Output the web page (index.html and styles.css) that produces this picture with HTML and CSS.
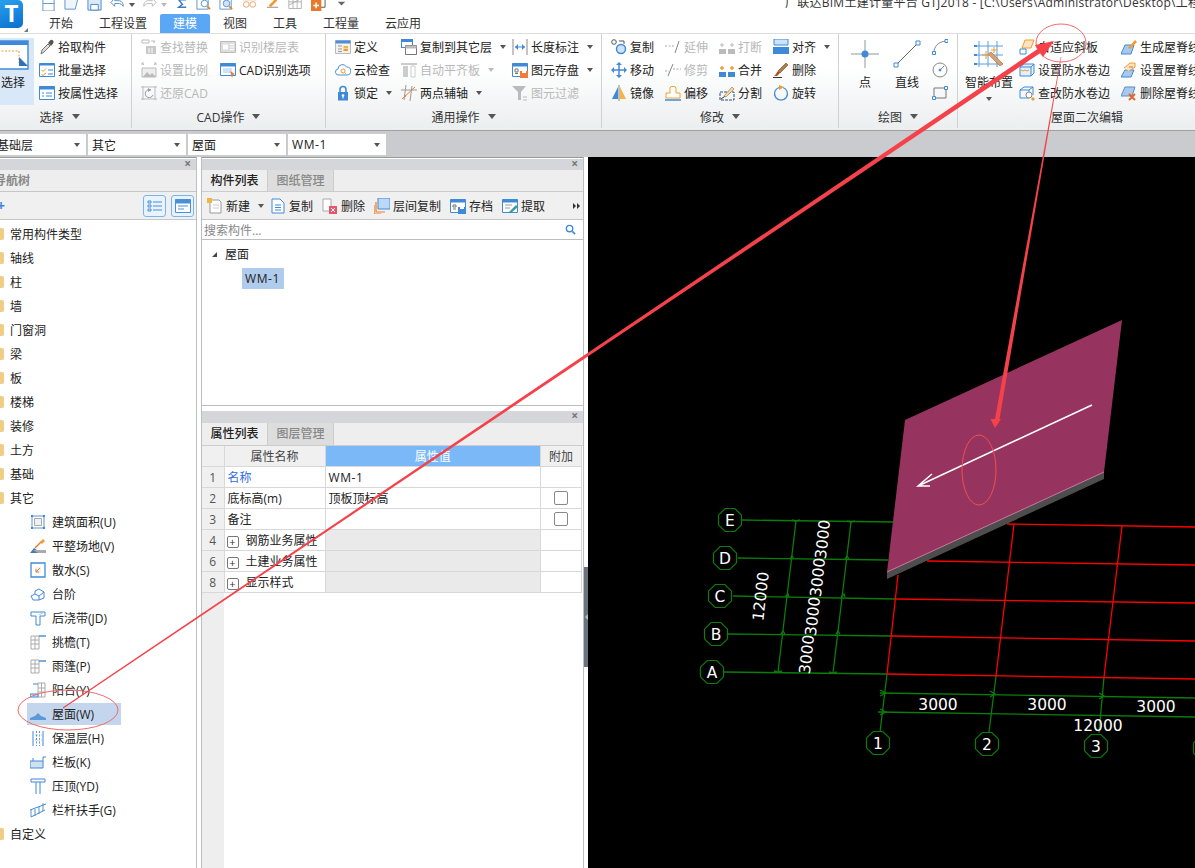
FILE: index.html
```html
<!DOCTYPE html>
<html lang="zh-CN">
<head>
  <meta charset="UTF-8">
  <title>广联达BIM土建计量平台 GTJ2018</title>
  <link rel="stylesheet" href="styles.css">
</head>
<body>
  <!-- Title bar and tabs -->
  <div class="top">
    <div class="app-btn">
      <div class="app-logo">T</div>
      <div class="app-corner"></div>
    </div>
    <div class="top-right">
      <div class="quick">
        <span class="q"><svg viewBox="0 0 16 16"><path d="M2 0h12v16H2z" fill="#fff" stroke="#5b93cc"/><path d="M2 8h12" stroke="#5b93cc"/></svg></span>
        <span class="q"><svg viewBox="0 0 16 16"><path d="M1 14V2h14l-3 12z" fill="#eef5fc" stroke="#5b93cc"/></svg></span>
        <span class="q"><svg viewBox="0 0 16 16"><path d="M1 0h14v15H1z" fill="#dceafa" stroke="#4a86c8"/><path d="M4 9h8v6H4z" fill="#fff" stroke="#4a86c8"/></svg></span>
        <span class="q q-s"><svg viewBox="0 0 16 16"><path d="M1 7l4-5v3h5a5 5 0 0 1 4 6 5 5 0 0 0-4-3H5v3z" fill="#fff" stroke="#5b8fc4"/></svg></span>
        <span class="q q-c"><i class="caret"></i></span>
        <span class="q q-s"><svg viewBox="0 0 16 16"><path d="M15 7l-4-5v3H6a5 5 0 0 0-4 6 5 5 0 0 1 4-3h5v3z" fill="#fff" stroke="#bbb"/></svg></span>
        <span class="q q-c"><i class="caret off"></i></span>
        <span class="q q-n"><svg viewBox="0 0 16 16"><path d="M5 4h8M5 4l4 5-4 3h8" fill="none" stroke="#3b7cc4" stroke-width="1.5"/></svg></span>
        <span class="q"><svg viewBox="0 0 16 16"><path d="M1 0h12v14H1z" fill="#fff" stroke="#5b93cc"/><circle cx="9" cy="8" r="3.5" fill="#fff" stroke="#5b93cc"/><path d="M12 11l3 3" stroke="#e8812a" stroke-width="2"/></svg></span>
        <span class="q"><svg viewBox="0 0 16 16"><path d="M1 0h12v14H1z" fill="#fff" stroke="#5b93cc"/><circle cx="8" cy="8" r="3.5" fill="#cfe3f7" stroke="#5b93cc"/><path d="M11 11l3 3" stroke="#e8812a" stroke-width="2"/></svg></span>
        <span class="q"><svg viewBox="0 0 16 16"><path d="M1 0h14v4H1z" fill="#f7d7b5" stroke="#e8a068"/><circle cx="4.5" cy="9" r="3" fill="#fff" stroke="#e8a068"/><circle cx="11.5" cy="9" r="3" fill="#fff" stroke="#e8a068"/></svg></span>
        <span class="q"><svg viewBox="0 0 16 16"><path d="M2 12h12" stroke="#888"/><path d="M4 10l7-7 2 2-7 7z" fill="#f09a30"/></svg></span>
        <span class="q"><svg viewBox="0 0 18 16"><path d="M1 0h15v14H1zM6 0v14M11 0v14M1 6h15" fill="none" stroke="#aaa"/><path d="M1 10l15-8" stroke="#aaa"/></svg></span>
        <span class="q"><svg viewBox="0 0 16 16"><path d="M5 0h10v12H5z" fill="#fff" stroke="#555"/><path d="M0 4h11v12H0z" fill="#e8792a"/><path d="M5.5 7v6M2.500 10h6" stroke="#fff" stroke-width="1.6"/></svg></span>
        <span class="q"><svg viewBox="0 0 16 16"><path d="M4 3h8" stroke="#666"/><path d="M4 6l4 4 4-4z" fill="#666"/></svg></span>
        <div class="win-title">广联达BIM土建计量平台 GTJ2018 - [C:\Users\Administrator\Desktop\工程</div>
      </div>
      <div class="tabs">
        <div class="tab">开始</div>
        <div class="tab">工程设置</div>
        <div class="tab active">建模</div>
        <div class="tab">视图</div>
        <div class="tab">工具</div>
        <div class="tab">工程量</div>
        <div class="tab">云应用</div>
      </div>
    </div>
  </div>

  <!-- Ribbon -->
  <div class="ribbon">
    <div class="group g-select">
      <div class="group-body">
        <div class="large select-btn">
          <svg class="ic-lg" viewBox="0 0 30 30"><path d="M-4 1h32v28H-4z" fill="#fff" stroke="#3f8ad8" stroke-width="1.4"/><path d="M-4 1h32v4H-4z" fill="#3f8ad8"/><path d="M-2 11h21v12" fill="none" stroke="#f09a30" stroke-dasharray="2 1.5"/><path d="M19 17l9 9H19z" fill="#3572b4"/></svg>
          <span>选择</span>
        </div>
        <div class="col">
          <div class="item"><svg class="ic" viewBox="0 0 16 16"><path d="M2 15l1-4 6-6 2 2-6 6z" fill="#ddd" stroke="#777"/><path d="M9 4l2-2.500a1.800 1.800 0 0 1 3 3L12 7z" fill="#555"/></svg>拾取构件</div>
          <div class="item"><svg class="ic" viewBox="0 0 16 16"><path d="M.5 1.500h15v13H.5z" fill="#fff" stroke="#3f8ad8"/><path d="M.5 1.500h15v2H.5z" fill="#3f8ad8"/><path d="M2.500 8l1.500 1.500L7 6.500M2.500 12.500l1.500 1 3-2.500" fill="none" stroke="#f09a30"/><path d="M9 8h5M9 12h5" stroke="#3f8ad8"/></svg>批量选择</div>
          <div class="item"><svg class="ic" viewBox="0 0 16 16"><path d="M.5 1.500h15v13H.5z" fill="#fff" stroke="#3f8ad8"/><path d="M.5 1.500h15v3H.5z" fill="#3f8ad8"/><path d="M3 8h2M3 11h2M7 8h6M7 11h6" stroke="#3f8ad8"/></svg>按属性选择</div>
        </div>
      </div>
      <div class="group-label label-select">选择<i class="caret big"></i></div>
    </div>

    <div class="group g-cad">
      <div class="group-body">
        <div class="col col-cad1">
          <div class="item off"><svg class="ic" viewBox="0 0 16 16"><path d="M1 1h7v3H1zM10 2h4l-1.500 2" fill="none" stroke="#bbb"/><path d="M5 7h10v8H5z" fill="#c8c8c8"/><path d="M8 9v5M11 9v5" stroke="#fff"/></svg>查找替换</div>
          <div class="item off"><svg class="ic" viewBox="0 0 16 16"><path d="M1 6h14v9H1z" fill="#eee" stroke="#bbb"/><path d="M2 15l4-5 3 3 2-2 4 4z" fill="#bbb"/><path d="M1 1l2 2M3 1H1v2M15 1l-2 2M13 1h2v2" fill="none" stroke="#bbb"/></svg>设置比例</div>
          <div class="item off"><svg class="ic" viewBox="0 0 16 16"><path d="M2 1v14M14 1v14M0 2h16M0 14h16" stroke="#bbb"/><path d="M10 5a4 4 0 1 0 2 5" fill="none" stroke="#999"/><path d="M7 3l3 2-3 2z" fill="#999"/></svg>还原CAD</div>
        </div>
        <div class="col">
          <div class="item off"><svg class="ic" viewBox="0 0 16 16"><path d="M.5 2.500h15v11H.5z" fill="#ddd" stroke="#bbb"/><path d="M3 5.500h5v5H3z" fill="#fff"/><path d="M10 5.500h4M10 8h4M10 10.500h4" stroke="#fff"/></svg>识别楼层表</div>
          <div class="item"><svg class="ic" viewBox="0 0 16 16"><path d="M.5 1.500h15v12H.5z" fill="#fff" stroke="#3f8ad8"/><path d="M.5 1.500h15v3H.5z" fill="#3f8ad8"/><path d="M3 6h9v5H3z" fill="#cfe3f7"/><path d="M10 9l5 3-2 1-1 3z" fill="#ee7b3c"/></svg>CAD识别选项</div>
        </div>
      </div>
      <div class="group-label">CAD操作<i class="caret big"></i></div>
    </div>

    <div class="group g-common">
      <div class="group-body">
        <div class="col col-c1">
          <div class="item"><svg class="ic" viewBox="0 0 16 16"><path d="M.5 1.500h15v13H.5z" fill="#f2f2f2" stroke="#bbb"/><path d="M.5 1.500h15v3H.5z" fill="#4a90d9"/><path d="M3 7h4M3 10h4M3 12.500h4" stroke="#999"/><path d="M8.500 7H13v2.500H8.500z" fill="#f5b342"/><path d="M8.500 11H13" stroke="#f09a30" stroke-width="2"/></svg>定义</div>
          <div class="item"><svg class="ic" viewBox="0 0 16 16"><path d="M4 13a3 3 0 0 1-1-6 4.500 4.500 0 0 1 8.500-2A4 4 0 0 1 12 13z" fill="#fff" stroke="#4a90d9"/><circle cx="8" cy="9" r="2" fill="none" stroke="#f09a30"/><path d="M9.500 10.500l1.500 1.500" stroke="#f09a30"/></svg>云检查</div>
          <div class="item"><svg class="ic" viewBox="0 0 16 16"><path d="M5 7V4.500a3 3 0 0 1 6 0V7" fill="none" stroke="#3f8ad8" stroke-width="1.600"/><path d="M3 7h10v8.500H3z" fill="#3f8ad8"/><circle cx="8" cy="10.500" r="1.300" fill="#fff"/><path d="M8 11v2.500" stroke="#fff"/></svg>锁定<i class="caret"></i></div>
        </div>
        <div class="col col-c2">
          <div class="item"><svg class="ic" viewBox="0 0 16 16"><path d="M0 0h12v9H0z" fill="#3f8ad8"/><path d="M1 3h10v5H1z" fill="#fff"/><path d="M4.500 6.500h11v9h-11z" fill="#fff" stroke="#777"/><path d="M4.500 6.500h11v3h-11z" fill="#bbb"/></svg>复制到其它层<i class="caret"></i></div>
          <div class="item off"><svg class="ic" viewBox="0 0 16 16"><path d="M0 1h16v2H0z" fill="#ccc"/><path d="M2 4h5v11H2z" fill="#ccc"/><path d="M10 4h4v11h-4z" fill="#fff" stroke="#ccc"/></svg>自动平齐板<i class="caret off"></i></div>
          <div class="item"><svg class="ic" viewBox="0 0 16 16"><path d="M5 0L3 15M11 1L9 16M0 5h16" fill="none" stroke="#999"/><path d="M1 14L14 2" stroke="#ee7b3c"/><circle cx="4" cy="11" r="1" fill="#ee7b3c"/></svg>两点辅轴<i class="caret"></i></div>
        </div>
        <div class="col">
          <div class="item"><svg class="ic" viewBox="0 0 16 16"><path d="M1 0v16M15 0v16" stroke="#888"/><path d="M3 8h10" stroke="#3f8ad8"/><path d="M3 8l3-3v6zM13 8l-3-3v6z" fill="#3f8ad8"/></svg>长度标注<i class="caret"></i></div>
          <div class="item"><svg class="ic" viewBox="0 0 16 16"><path d="M.5 1.500h15v13H.5z" fill="#fff" stroke="#3f8ad8"/><path d="M.5 1.500h15v3H.5z" fill="#3f8ad8"/><path d="M3 7h3v3H3zM3 11.500h3" fill="none" stroke="#777"/><path d="M8 9h8v7H8z" fill="#ee7b3c"/><path d="M10 9h4v2h-4z" fill="#fff"/></svg>图元存盘<i class="caret"></i></div>
          <div class="item off"><svg class="ic" viewBox="0 0 16 16"><path d="M0 1h14L9 7v8H6V7z" fill="#bbb"/><path d="M11 12h4M11 15h4" stroke="#bbb"/></svg>图元过滤</div>
        </div>
      </div>
      <div class="group-label">通用操作<i class="caret big"></i></div>
    </div>

    <div class="group g-modify">
      <div class="group-body">
        <div class="col col-m">
          <div class="item"><svg class="ic" viewBox="0 0 16 16"><circle cx="3" cy="3" r="2.300" fill="#fff" stroke="#555"/><circle cx="10" cy="10" r="4.500" fill="#cfe3f7" stroke="#3f8ad8" stroke-width="1.500"/><path d="M8 2h5v3" fill="none" stroke="#555"/></svg>复制</div>
          <div class="item"><svg class="ic" viewBox="0 0 16 16"><path d="M8 3v10M3 8h10" stroke="#3f8ad8" stroke-width="1.500"/><path d="M8 0l3 3H5zM8 16l3-3H5zM0 8l3-3v6zM16 8l-3-3v6z" fill="#3f8ad8"/></svg>移动</div>
          <div class="item"><svg class="ic" viewBox="0 0 16 16"><path d="M7 2L1 14h6z" fill="#3f8ad8"/><path d="M9 2v12h6z" fill="#f5b342"/><path d="M8 0v16" stroke="#888"/></svg>镜像</div>
        </div>
        <div class="col col-m">
          <div class="item off"><svg class="ic" viewBox="0 0 16 16"><path d="M0 7h9" stroke="#aaa" stroke-dasharray="2 1.500"/><path d="M10 14l4-12" stroke="#888"/></svg>延伸</div>
          <div class="item off"><svg class="ic" viewBox="0 0 16 16"><path d="M0 9h4M8 7h8" stroke="#aaa" stroke-dasharray="2 1.500"/><path d="M3 14L8 2" stroke="#888"/></svg>修剪</div>
          <div class="item"><svg class="ic" viewBox="0 0 16 16"><path d="M1 13V8h4V3.500a2 2 0 0 1 2-2h2a2 2 0 0 1 2 2V8h4v5z" fill="#fff" stroke="#f0a030"/><path d="M0 15h16" stroke="#3f8ad8" stroke-width="1.500"/></svg>偏移</div>
        </div>
        <div class="col col-m">
          <div class="item off"><svg class="ic" viewBox="0 0 16 16"><path d="M0 10h7v5H0zM9 10h7v5H9z" fill="#bbb"/><path d="M1 6h4M3 4v4M11 6h4M13 4v4" stroke="#bbb"/></svg>打断</div>
          <div class="item"><svg class="ic" viewBox="0 0 16 16"><path d="M0 10h7v5H0zM9 10h7v5H9z" fill="#3f8ad8"/><path d="M1 6h4M3 4v4M11 6h4M13 4v4" stroke="#f09a30" stroke-width="1.400"/></svg>合并</div>
          <div class="item"><svg class="ic" viewBox="0 0 16 16"><path d="M1 7h14v8H1z" fill="none" stroke="#2c4f80" stroke-dasharray="3 1"/><path d="M2 14l10-7" stroke="#333"/><path d="M5 11l8-9 2 2-8 8z" fill="#f5d9a8" stroke="#a06c30" stroke-width=".6"/></svg>分割</div>
        </div>
        <div class="col">
          <div class="item"><svg class="ic" viewBox="0 0 16 16"><path d="M1 0h14v6H1z" fill="#cfe3f7" stroke="#3f8ad8"/><path d="M0 8h16v7H0z" fill="#3f8ad8"/></svg>对齐<i class="caret"></i></div>
          <div class="item"><svg class="ic" viewBox="0 0 16 16"><path d="M13 1l2 2-8 8-2-2z" fill="#a88050" stroke="#6a4a28" stroke-width=".6"/><path d="M5 9l2 2-3 3H1c2-1 2-3 4-5z" fill="#b34a20"/><path d="M0 15.500h9" stroke="#333"/></svg>删除</div>
          <div class="item"><svg class="ic" viewBox="0 0 16 16"><path d="M6 2.500a6.500 6.500 0 1 0 4 0" fill="none" stroke="#4a90d9" stroke-width="1.300"/><path d="M6 0l5 2-5 3z" fill="#f09a30"/></svg>旋转</div>
        </div>
      </div>
      <div class="group-label">修改<i class="caret big"></i></div>
    </div>

    <div class="group g-draw">
      <div class="group-body">
        <div class="large draw-btn">
          <svg class="ic-lg" viewBox="0 0 30 30"><path d="M15 1v28M1 15h28" stroke="#8a97a5"/><circle cx="15" cy="15" r="3.500" fill="#3f8ad8"/></svg>
          <span>点</span>
        </div>
        <div class="large draw-btn line-btn">
          <svg class="ic-lg" viewBox="0 0 30 30"><path d="M4 26L26 4" stroke="#666"/><path d="M2 24h4v4H2zM24 2h4v4h-4z" fill="#fff" stroke="#3f8ad8"/></svg>
          <span>直线</span>
        </div>
        <div class="col col-shape">
          <div class="item"><svg class="ic" viewBox="0 0 16 16"><path d="M2 14C2 7 6 3 14 2" fill="none" stroke="#888"/><path d="M.5 12.500h3v3h-3zM13 .5h3v3h-3z" fill="#fff" stroke="#3f8ad8"/></svg></div>
          <div class="item"><svg class="ic" viewBox="0 0 16 16"><circle cx="8" cy="8" r="7" fill="none" stroke="#888"/><path d="M8 8l4-4" stroke="#888"/><path d="M6.800 6.800h2.400v2.400H6.800z" fill="#3f8ad8"/></svg></div>
          <div class="item"><svg class="ic" viewBox="0 0 16 16"><path d="M2 3h12v10H2z" fill="none" stroke="#777"/><path d="M.5 11.500h3v3h-3zM12.500 1.500h3v3h-3z" fill="#fff" stroke="#3f8ad8"/></svg></div>
        </div>
      </div>
      <div class="group-label">绘图<i class="caret big"></i></div>
    </div>

    <div class="group g-roof">
      <div class="group-body">
        <div class="large smart-btn">
          <svg class="ic-lg" viewBox="0 0 30 30"><path d="M5 2v26M14 2v26M23 2v26M1 7h28M1 16h28M1 25h28" stroke="#5aa0e0"/><path d="M0 7h3M0 16h3M0 25h3" stroke="#3f8ad8" stroke-width="2"/><path d="M14 15l12 12 3-2L17 13z" fill="#d8a070" stroke="#a07040" stroke-width=".6"/><path d="M12 12v8M8 16h8M20 8v6M17 11h6" stroke="#f09a30"/></svg>
          <span>智能布置</span>
          <i class="caret"></i>
        </div>
        <div class="col col-r1">
          <div class="item"><svg class="ic" viewBox="0 0 16 16"><path d="M6 1h9l-3 8H3z" fill="#fde4c0" stroke="#f09a30"/><path d="M1 10h6v5H1z" fill="#fff" stroke="#3f8ad8"/></svg>自适应斜板</div>
          <div class="item"><svg class="ic" viewBox="0 0 16 16"><path d="M1 5l4-3h10v9l-3 3H1z" fill="#e4f0fb" stroke="#3f8ad8"/><path d="M1 5h11v9M12 5l3-3" fill="none" stroke="#3f8ad8"/><path d="M2 8l2 1 2-1 2 1 2-1" fill="none" stroke="#f09a30"/></svg>设置防水卷边</div>
          <div class="item"><svg class="ic" viewBox="0 0 16 16"><path d="M1 5l4-3h9v8M1 5h9v8H1zM10 5l4-3" fill="none" stroke="#3f8ad8"/><circle cx="10" cy="10" r="3" fill="#fff" stroke="#888"/><path d="M12 14l2-2 2 2-2 2z" fill="#f09a30"/></svg>查改防水卷边</div>
        </div>
        <div class="col">
          <div class="item"><svg class="ic" viewBox="0 0 16 16"><path d="M4 6h9l-3 9H0z" fill="#a8c8ec" stroke="#3f8ad8"/><path d="M7 9l7-8 2 2-7 7z" fill="#f09a30"/></svg>生成屋脊线</div>
          <div class="item"><svg class="ic" viewBox="0 0 16 16"><path d="M4 8h9l-3 7H0z" fill="#a8c8ec" stroke="#3f8ad8"/><path d="M3 6l6-5h5v4l-6 4" fill="#fde4c0" stroke="#f09a30"/><path d="M8 5h4" stroke="#e8712a"/></svg>设置屋脊线</div>
          <div class="item"><svg class="ic" viewBox="0 0 16 16"><path d="M4 2h10l-3 9H0z" fill="#a8c8ec" stroke="#5b8fc4"/><path d="M8 9l6 6M14 9l-6 6" stroke="#e8602a" stroke-width="1.800"/></svg>删除屋脊线</div>
        </div>
      </div>
      <div class="group-label label-roof">屋面二次编辑</div>
    </div>
  </div>

  <!-- Floor and component selectors -->
  <div class="selector-bar">
    <div class="pick pick-first"><span class="pick-cut">基础层</span><i class="caret"></i></div>
    <div class="pick">其它<i class="caret"></i></div>
    <div class="pick">屋面<i class="caret"></i></div>
    <div class="pick"><span class="latin">WM-1</span><i class="caret"></i></div>
  </div>

  <div class="main">
    <!-- Navigation tree -->
    <div class="nav-panel">
      <div class="title-strip">×</div>
      <div class="nav-head"><span>导航树</span></div>
      <div class="nav-tools">
        <span class="plus">+</span>
        <span class="view-btn"><svg viewBox="0 0 16 14"><path d="M1 2h3v2H1zM1 6h3v2H1zM1 10h3v2H1z" fill="none" stroke="#4a90d9"/><path d="M6 3h9M6 7h9M6 11h9" stroke="#4a90d9"/></svg></span>
        <span class="view-btn"><svg viewBox="0 0 16 14"><path d="M.5.500h15v13H.5z" fill="#fff" stroke="#4a90d9"/><path d="M.5.500h15v4H.5z" fill="#4a90d9"/><path d="M3 7h10M3 10h6" stroke="#4a90d9"/></svg></span>
      </div>
      <div class="nav-tree">
        <div class="tree-row"><i class="folder"></i>常用构件类型</div>
        <div class="tree-row"><i class="folder"></i>轴线</div>
        <div class="tree-row"><i class="folder"></i>柱</div>
        <div class="tree-row"><i class="folder"></i>墙</div>
        <div class="tree-row"><i class="folder"></i>门窗洞</div>
        <div class="tree-row"><i class="folder"></i>梁</div>
        <div class="tree-row"><i class="folder"></i>板</div>
        <div class="tree-row"><i class="folder"></i>楼梯</div>
        <div class="tree-row"><i class="folder"></i>装修</div>
        <div class="tree-row"><i class="folder"></i>土方</div>
        <div class="tree-row"><i class="folder"></i>基础</div>
        <div class="tree-row"><i class="folder"></i>其它</div>
        <div class="tree-row child"><svg class="ic" viewBox="0 0 16 16"><path d="M2 2h12v12H2z" fill="#fff" stroke="#5b93cc"/><path d="M4.500 4.500h7v7h-7z" fill="#eef2f6" stroke="#aaa"/><path d="M1 1h2v2H1zM13 1h2v2h-2zM1 13h2v2H1zM13 13h2v2h-2z" fill="#3f8ad8"/></svg>建筑面积(U)</div>
        <div class="tree-row child"><svg class="ic" viewBox="0 0 16 16"><path d="M0 15l4-5 3 2 3 3z" fill="#4a78b0"/><path d="M5 10l6-6" stroke="#e8792a" stroke-width="1.400"/><path d="M10 4l3-3 2 2-3 3z" fill="#f09a30"/><path d="M3 12h13v3H8z" fill="#aaa"/></svg>平整场地(V)</div>
        <div class="tree-row child"><svg class="ic" viewBox="0 0 16 16"><path d="M1 1h14v14H1z" fill="#fff" stroke="#3f8ad8" stroke-width="1.300"/><path d="M5 5h6v6H5z" fill="#eaf3fc"/><path d="M10 6l-4 4M6 7v3h3" fill="none" stroke="#e8792a"/></svg>散水(S)</div>
        <div class="tree-row child"><svg class="ic" viewBox="0 0 16 16"><path d="M1 10l4-2V5l4-2 5 3v6l-5 2H3z" fill="#fff" stroke="#3f8ad8"/><path d="M5 8l4 2v4M9 10l5-4" fill="none" stroke="#3f8ad8"/></svg>台阶</div>
        <div class="tree-row child"><svg class="ic" viewBox="0 0 16 16"><path d="M1 2h14v4H10v9H6V6H1z" fill="#fff" stroke="#3f8ad8"/><path d="M9 5l5-3" stroke="#bbb"/></svg>后浇带(JD)</div>
        <div class="tree-row child"><svg class="ic" viewBox="0 0 16 16"><path d="M1 2h8v13H1zM1 6h8M1 10h8M5 2v13" fill="none" stroke="#aaa"/><path d="M9 2h7" stroke="#3f8ad8" stroke-width="1.400"/></svg>挑檐(T)</div>
        <div class="tree-row child"><svg class="ic" viewBox="0 0 16 16"><path d="M1 2h8v13H1zM1 6h8M1 10h8M5 2v13" fill="none" stroke="#aaa"/><path d="M9 3h7" stroke="#3f8ad8" stroke-width="1.400"/></svg>雨篷(P)</div>
        <div class="tree-row child"><svg class="ic" viewBox="0 0 16 16"><path d="M8 1h7v14H8zM8 6h7M8 10h7M11.500 1v14" fill="none" stroke="#aaa"/><path d="M0 12h8v3H0z" fill="#cfe3f7" stroke="#3f8ad8"/><path d="M3 2h5" stroke="#3f8ad8"/></svg>阳台(Y)</div>
        <div class="tree-row child selected"><svg class="ic" viewBox="0 0 16 16"><path d="M0 12l5-2 3-3 3 3 5 2v2H0z" fill="#5a9ad8"/></svg>屋面(W)</div>
        <div class="tree-row child"><svg class="ic" viewBox="0 0 16 16"><path d="M3 1v15M13 1v15" stroke="#3f8ad8"/><path d="M6.500 1v15M9.500 1v15" stroke="#5b93cc" stroke-dasharray="2 1.500"/><path d="M3 5h10M3 10h10" stroke="#aac6e6" stroke-dasharray="1 1"/></svg>保温层(H)</div>
        <div class="tree-row child"><svg class="ic" viewBox="0 0 16 16"><path d="M0 7h13v7H0z" fill="#cfe0f2" stroke="#3f8ad8"/><path d="M13 7V3h3" fill="none" stroke="#3f8ad8"/><path d="M3 7V4" stroke="#3f8ad8"/></svg>栏板(K)</div>
        <div class="tree-row child"><svg class="ic" viewBox="0 0 16 16"><path d="M1 1h14v3H1z" fill="#fff" stroke="#3f8ad8"/><path d="M6 4v12M10 4v12" stroke="#3f8ad8"/></svg>压顶(YD)</div>
        <div class="tree-row child"><svg class="ic" viewBox="0 0 16 16"><path d="M1 8v7M5 7v7M9 5v7M13 1v8" stroke="#5b93cc"/><path d="M0 8l16-6M1 15l14-7" stroke="#3f8ad8"/></svg>栏杆扶手(G)</div>
        <div class="tree-row"><i class="folder"></i>自定义</div>
      </div>
    </div>

    <!-- Component list and property table -->
    <div class="mid">
      <div class="list-panel">
        <div class="title-strip">×</div>
        <div class="tab-strip">
          <div class="p-tab on">构件列表</div>
          <div class="p-tab">图纸管理</div>
        </div>
        <div class="list-tools">
          <span class="tool tool-new"><svg class="ic" viewBox="0 0 16 16"><path d="M3 2h9l2 2v11H3z" fill="#fff" stroke="#999"/><path d="M0 0h5v5H0z" fill="#f5b342"/><path d="M6 7h6M6 10h6" stroke="#ccc"/></svg>新建<i class="caret"></i></span>
          <span class="tool tool-copy"><svg class="ic" viewBox="0 0 16 16"><path d="M2 1h8l4 4v10H2z" fill="#fff" stroke="#3f8ad8"/><path d="M5 7h6M5 9.500h6M5 12h6" stroke="#3f8ad8"/></svg>复制</span>
          <span class="tool tool-del"><svg class="ic" viewBox="0 0 16 16"><path d="M1 1h8v12H1z" fill="#fff" stroke="#aaa"/><path d="M7 8h8v8H7z" fill="#e8556a"/><path d="M9 10l4 4M13 10l-4 4" stroke="#fff"/></svg>删除</span>
          <span class="tool tool-floor"><svg class="ic" viewBox="0 0 16 16"><path d="M4 0h12v11H4z" fill="#bcd8f8" stroke="#3f8ad8"/><path d="M2 4v10h9M0 7v9h7" fill="none" stroke="#f07a20" stroke-width="1.200"/></svg>层间复制</span>
          <span class="tool tool-save"><svg class="ic" viewBox="0 0 16 16"><path d="M.5 1.500h15v13H.5z" fill="#fff" stroke="#3f8ad8"/><path d="M.5 1.500h15v3H.5z" fill="#3f8ad8"/><path d="M3 7h3v2H3zM3 11h3" fill="none" stroke="#777"/><path d="M8 9h8v7H8z" fill="#3f8ad8"/><path d="M10 9h4v2h-4z" fill="#fff"/></svg>存档</span>
          <span class="tool"><svg class="ic" viewBox="0 0 16 16"><path d="M.5 1.500h15v13H.5z" fill="#fff" stroke="#3f8ad8"/><path d="M.5 1.500h15v3H.5z" fill="#3f8ad8"/><path d="M3 7h7M3 10h5" stroke="#999"/><path d="M7 14l7-7 2 2-7 6z" fill="#3d9a9a"/></svg>提取</span>
          <span class="more"><i class="tri-r"></i><i class="tri-r"></i></span>
        </div>
        <div class="search">
          <span>搜索构件...</span>
          <svg class="search-ic" viewBox="0 0 12 12"><circle cx="5" cy="5" r="3.500" fill="none" stroke="#3f8ad8" stroke-width="1.500"/><path d="M8 8l3 3" stroke="#3f8ad8" stroke-width="1.700"/></svg>
        </div>
        <div class="list-tree">
          <div class="list-parent"><i class="tri"></i>屋面</div>
          <div class="list-child"><span class="latin">WM-1</span></div>
        </div>
      </div>

      <div class="prop-panel">
        <div class="title-strip">×</div>
        <div class="tab-strip">
          <div class="p-tab on">属性列表</div>
          <div class="p-tab">图层管理</div>
        </div>
        <div class="prop-body">
          <table class="prop">
            <colgroup><col class="c-no"><col class="c-name"><col class="c-val"><col class="c-add"></colgroup>
            <tr class="head"><th></th><th>属性名称</th><th class="sel">属性值</th><th>附加</th></tr>
            <tr><td class="no">1</td><td class="link">名称</td><td class="latin">WM-1</td><td></td></tr>
            <tr><td class="no">2</td><td>底标高(m)</td><td>顶板顶标高</td><td class="chk"><i class="box"></i></td></tr>
            <tr><td class="no">3</td><td>备注</td><td></td><td class="chk"><i class="box"></i></td></tr>
            <tr><td class="no">4</td><td class="grp"><i class="exp">+</i>钢筋业务属性</td><td class="shade"></td><td></td></tr>
            <tr><td class="no">6</td><td class="grp"><i class="exp">+</i>土建业务属性</td><td class="shade"></td><td></td></tr>
            <tr><td class="no">8</td><td class="grp"><i class="exp">+</i>显示样式</td><td class="shade"></td><td></td></tr>
          </table>
        </div>
      </div>
    </div>

    <div class="splitter"><div class="handle"><i class="handle-arrow"></i></div></div>

    <!-- CAD viewport, coordinates in page pixels -->
    <div class="viewport">
      <svg class="cad" viewBox="588 157 607 711">
        <defs>
          <polygon id="bubble" points="-4.800,-11.500 4.800,-11.500 11.500,-4.800 11.500,4.800 4.800,11.500 -4.800,11.500 -11.500,4.800 -11.500,-4.800" fill="none" stroke="#0a7d0a" stroke-width="1.200"/>
        </defs>
        <g class="green">
          <path d="M723 672L887 674M728 634L892 636M733 596L896 599M738 558L888 560M742 520L893 522"/>
          <path d="M880 732L887 674M989 732L996 676M1099 733L1104 677"/>
          <path d="M778 672L796 521M833 673L851 522"/>
          <path d="M880 693L1195 698M878 712L1195 717"/>
          <path d="M774 671l4 1 4-1M792 520l4 1 4-1M829 672l4 1 4-1M847 521l4 1 4-1M781 634l2-3 2 3M836 634l2-3 2 3M785 597l3-3 1 3M841 597l3-3 1 3M790 559l2-3 2 3M845 559l2-3 2 3"/>
          <path d="M880 690l6 3-6 3M990 691l5 3-5 3M1099 693l5 3-5 3M880 709l6 3-6 3"/>
        </g>
        <g class="red">
          <path d="M887 674L1195 679M892 636L1195 641M896 599L1195 603M927 561L1195 565M1007 524L1195 527"/>
          <path d="M887 674L898 575M996 676L1014 524M1104 677L1122 526"/>
        </g>
        <polygon points="887,572 1104,472 1104,479 887,579" fill="#4d4d4d"/>
        <polygon points="905,420 1122,320 1104,472 887,572" fill="#96345f"/>
        <path d="M887 572L1104 472" stroke="#c77fa0" stroke-width="1" fill="none"/>
        <path d="M1092 405L918 486M932 474L918 486L930 486" stroke="#fff" stroke-width="1.500" fill="none"/>
        <g>
          <use href="#bubble" x="730" y="520"/><use href="#bubble" x="725" y="558"/><use href="#bubble" x="720" y="596"/>
          <use href="#bubble" x="716" y="634"/><use href="#bubble" x="712" y="672"/>
          <use href="#bubble" x="878" y="743"/><use href="#bubble" x="987" y="744"/><use href="#bubble" x="1096" y="746"/><use href="#bubble" x="1205" y="748"/>
        </g>
        <g class="cad-text">
          <text x="730" y="526">E</text><text x="725" y="564">D</text><text x="720" y="602">C</text><text x="716" y="640">B</text><text x="712" y="678">A</text>
          <text x="878" y="749">1</text><text x="987" y="750">2</text><text x="1096" y="752">3</text>
          <text x="938" y="710">3000</text><text x="1047" y="710">3000</text><text x="1156" y="712">3000</text>
          <text x="1098" y="731">12000</text>
          <text transform="translate(766 597) rotate(-83.500)">12000</text>
          <text transform="translate(812 655) rotate(-83.500)">3000</text>
          <text transform="translate(818 617) rotate(-83.500)">3000</text>
          <text transform="translate(823 578) rotate(-83.500)">3000</text>
          <text transform="translate(828 540) rotate(-83.500)">3000</text>
        </g>
      </svg>
    </div>
  </div>

  <!-- Hand-drawn red markup on top of the screenshot -->
  <svg class="markup" viewBox="0 0 1195 868">
    <ellipse cx="68" cy="710" rx="50" ry="20" fill="none" stroke="#ee6a6a"/>
    <ellipse cx="1061" cy="43" rx="25" ry="19" fill="none" stroke="#ee6a6a"/>
    <ellipse cx="979" cy="470" rx="17" ry="35" fill="none" stroke="#ee5050"/>
    <polygon points="62.700,707.600 63.300,708.400 1040.400,53 1043,57 1054,41 1035,45 1037.600,49" fill="#f5424a"/>
    <polygon points="1060.800,57 1061.300,57 999.500,419 1001,419 995,428 990.500,419 995,419" fill="#f5424a"/>
  </svg>
</body>
</html>
```

FILE: styles.css
```css
html, body {
  margin: 0;
  padding: 0;
  height: 100%;
}

body {
  position: relative;
  width: 1195px;
  height: 868px;
  overflow: hidden;
  background: #fff;
  color: #222;
  font-family: "Open Sans", "Noto Sans CJK SC", sans-serif;
  font-size: 12px;
}

i {
  font-style: normal;
}

.latin {
  letter-spacing: .6px;
}

.caret {
  display: inline-block;
  width: 0;
  height: 0;
  margin-left: 5px;
  border-top: 4px solid #555;
  border-left: 3px solid transparent;
  border-right: 3px solid transparent;
}

.caret.off {
  border-top-color: #bbb;
}

.caret.big {
  margin-left: 8px;
  border-top-width: 5px;
  border-left-width: 4px;
  border-right-width: 4px;
}

/* Top bar */
.top {
  display: flex;
  height: 33px;
}

.app-btn {
  position: relative;
  width: 31px;
  flex: none;
  overflow: hidden;
}

.app-logo {
  width: 23px;
  height: 28px;
  background: linear-gradient(160deg, #2aa0ee, #0a6fd0);
  border-radius: 0 5px 5px 0;
  color: #fff;
  font-size: 24px;
  font-weight: 700;
  line-height: 26px;
  text-align: center;
}

.app-corner {
  position: absolute;
  right: 3px;
  bottom: 1px;
  border-bottom: 4px solid #777;
  border-left: 4px solid transparent;
}

.top-right {
  flex: 1;
  min-width: 0;
}

.quick {
  display: flex;
  height: 14px;
  padding-left: 10px;
  overflow: hidden;
}

.q {
  display: block;
  width: 23px;
  height: 13px;
  flex: none;
  overflow: hidden;
}

.q svg {
  display: block;
  width: 15px;
  height: 15px;
  margin-top: -4px;
}

.q-s { width: 19px; }
.q-c { width: 13px; }
.q-n { width: 22px; }

.q .caret {
  display: block;
  margin: 3px 0 0;
}

.win-title {
  position: absolute;
  left: 785px;
  top: -5px;
  white-space: nowrap;
  letter-spacing: .25px;
  line-height: 16px;
  color: #333;
}

.tabs {
  display: flex;
  height: 19px;
  margin-left: 5px;
}

.tab {
  padding: 0 13px;
  line-height: 19px;
  color: #333;
}

.tab.active {
  background: #5aa8f5;
  color: #fff;
  border-radius: 2px 2px 0 0;
}

/* Ribbon */
.ribbon {
  display: flex;
  height: 96px;
  border-top: 1px solid #ddd;
  border-bottom: 1px solid #a0a0a0;
  background: linear-gradient(#fff 35%, #ebeeef);
}

.group {
  display: flex;
  flex-direction: column;
  flex: none;
  margin-bottom: 2px;
  border-right: 1px solid #cfd2d4;
}

.group-body {
  display: flex;
  height: 71px;
  padding-top: 1px;
}

.group-label {
  display: flex;
  align-items: center;
  justify-content: center;
  height: 21px;
  color: #333;
}

.g-select { width: 131px; }
.g-cad { width: 184px; padding-left: 9px; }
.g-common { width: 266px; padding-left: 9px; }
.g-modify { width: 227px; padding-left: 9px; }
.g-draw { width: 107px; padding-left: 11px; }
.g-roof { flex: 1; padding-left: 7px; border-right: 0; }

.label-select { padding-right: 12px; }
.g-cad .group-label { margin-left: -9px; }
.g-common .group-label { margin-left: -9px; }
.g-modify .group-label { margin-left: -9px; }
.g-draw .group-label { margin-left: -11px; }
.label-roof { justify-content: flex-start; margin-left: 86px; }

.col {
  display: flex;
  flex-direction: column;
  flex: none;
}

.item {
  display: flex;
  align-items: center;
  gap: 3px;
  height: 23px;
  white-space: nowrap;
}

.item.off {
  color: #b8b8b8;
}

.ic {
  display: block;
  width: 16px;
  height: 16px;
  flex: none;
}

.ic-lg {
  display: block;
  width: 30px;
  height: 30px;
  flex: none;
}

.large {
  display: flex;
  flex-direction: column;
  align-items: center;
  flex: none;
}

.large span {
  line-height: 18px;
  margin-top: 5px;
}

.select-btn {
  width: 34px;
  height: 67px;
  margin: 3px 5px 0 0;
  padding-top: 2px;
  box-sizing: border-box;
  background: #d9e8f8;
}

.select-btn .ic-lg {
  margin-right: 4px;
  overflow: hidden;
}

.select-btn span {
  margin: 4px 8px 0 0;
}

.col-cad1 { width: 79px; }
.col-c1 { width: 66px; }
.col-c2 { width: 111px; }
.col-m { width: 54px; }

.draw-btn {
  width: 30px;
  padding-top: 4px;
}

.line-btn {
  margin-left: 12px;
}

.col-shape {
  margin-left: 10px;
}

.smart-btn {
  width: 48px;
  padding-top: 4px;
  margin-right: 6px;
}

.smart-btn span {
  white-space: nowrap;
}

.smart-btn .caret {
  margin: 5px 0 0;
}

.col-r1 { width: 102px; }

/* Selector row */
.selector-bar {
  display: flex;
  gap: 2px;
  height: 26px;
  padding-top: 3px;
  box-sizing: border-box;
  background: #c9cbce;
}

.pick {
  display: flex;
  align-items: center;
  justify-content: space-between;
  width: 98px;
  height: 21px;
  padding: 0 4px;
  box-sizing: border-box;
  background: #fff;
}

.pick .caret {
  margin-right: 2px;
}

.pick-first {
  width: 86px;
  padding-left: 0;
}

.pick-cut {
  margin-left: -3px;
}

/* Main area */
.main {
  display: flex;
  height: 711px;
}

.title-strip {
  height: 11px;
  margin-top: 1px;
  padding-right: 5px;
  background: #d4d6da;
  color: #777;
  font-size: 12px;
  font-weight: 700;
  line-height: 10px;
  text-align: right;
}

.nav-panel {
  width: 196px;
  flex: none;
  border-right: 1px solid #bcbec2;
  border-top: 1px solid #999;
}

.nav-head {
  height: 21px;
  background: #eee;
  border-bottom: 1px solid #c4c6ca;
  color: #888;
  font-weight: 700;
  line-height: 21px;
  overflow: hidden;
}

.nav-head span {
  display: block;
  margin-left: -6px;
}

.nav-tools {
  display: flex;
  align-items: center;
  gap: 5px;
  height: 27px;
  padding-right: 2px;
  background: #f0f0f0;
  border-bottom: 1px solid #c4c6ca;
}

.plus {
  margin-right: auto;
  margin-left: -3px;
  color: #3f8ad8;
  font-size: 14px;
  font-weight: 700;
}

.view-btn {
  display: flex;
  align-items: center;
  justify-content: center;
  width: 21px;
  height: 20px;
  background: #e8f3fd;
  border: 1px solid #7ab4ee;
  border-radius: 3px;
}

.view-btn svg {
  width: 16px;
  height: 14px;
}

.nav-tree {
  padding-top: 2px;
}

.tree-row {
  display: flex;
  align-items: center;
  gap: 6px;
  height: 24px;
}

.folder {
  width: 4px;
  height: 12px;
  background: #f0cd84;
  border-radius: 0 2px 2px 0;
}

.tree-row.child {
  padding-left: 30px;
}

.tree-row.selected {
  background: linear-gradient(90deg, transparent 27px, #c4d6ee 27px, #c4d6ee 121px, transparent 121px);
  background-size: 100% 22px;
  background-position: 0 1px;
  background-repeat: no-repeat;
}

.mid {
  display: flex;
  flex-direction: column;
  gap: 5px;
  width: 381px;
  flex: none;
  margin-left: 4px;
  border-left: 1px solid #bcbec2;
  border-right: 1px solid #bcbec2;
  border-top: 1px solid #999;
}

.list-panel {
  height: 248px;
  flex: none;
  border-bottom: 1px solid #bcbec2;
  box-sizing: border-box;
}

.prop-panel {
  flex: 1;
  display: flex;
  flex-direction: column;
  min-height: 0;
}

.prop-panel .title-strip {
  margin-top: 0;
  height: 12px;
}

.tab-strip {
  display: flex;
  height: 22px;
  box-sizing: border-box;
  background: #eee;
  border-bottom: 1px solid #ccc;
}

.prop-panel .tab-strip {
  height: 23px;
}

.p-tab {
  width: 65px;
  line-height: 21px;
  text-align: center;
  background: #ddd;
  color: #888;
  font-weight: 500;
  border-right: 1px solid #ccc;
}

.p-tab.on {
  background: #eee;
  color: #222;
}

.list-tools {
  display: flex;
  align-items: center;
  height: 27px;
  padding-left: 5px;
  background: #f0f0f0;
  border-bottom: 1px solid #c4c6ca;
}

.tool {
  display: flex;
  align-items: center;
  gap: 3px;
  flex: none;
}

.tool .caret { margin-left: 5px; }
.tool-new { width: 63px; }
.tool-copy { width: 52px; }
.tool-del { width: 52px; }
.tool-floor { width: 76px; }
.tool-save { width: 52px; }

.more {
  display: flex;
  gap: 1px;
  margin-left: auto;
  margin-right: 3px;
}

.tri-r {
  width: 0;
  height: 0;
  border-left: 3px solid #333;
  border-top: 3px solid transparent;
  border-bottom: 3px solid transparent;
}

.search {
  display: flex;
  align-items: center;
  justify-content: space-between;
  height: 19px;
  padding: 0 7px 0 2px;
  border-bottom: 1px solid #bcbec2;
  color: #888;
}

.search-ic {
  width: 11px;
  height: 11px;
}

.list-tree {
  padding-top: 2px;
}

.list-parent {
  display: flex;
  align-items: center;
  height: 24px;
  padding-left: 10px;
}

.tri {
  width: 0;
  height: 0;
  margin-right: 8px;
  border-bottom: 5px solid #444;
  border-left: 5px solid transparent;
}

.list-child {
  padding: 2px 0 0 40px;
}

.list-child span {
  display: inline-block;
  height: 21px;
  padding: 0 4px 0 3px;
  background: #b0ccec;
  line-height: 21px;
}

.prop-body {
  flex: 1;
  background: linear-gradient(90deg, #eee 22px, #fff 22px);
}

.prop {
  width: 380px;
  table-layout: fixed;
  border-collapse: collapse;
}

.c-no { width: 22px; }
.c-name { width: 101px; }
.c-add { width: 41px; }

.prop th, .prop td {
  height: 20px;
  padding: 0 0 0 3px;
  border: 1px solid #d8d8d8;
  font-weight: 400;
  text-align: left;
  white-space: nowrap;
  overflow: hidden;
}

.prop tr:first-child th {
  border-top: 0;
}

.prop th:first-child, .prop td:first-child {
  border-left: 0;
}

.prop th {
  background: #f0f0f0;
  color: #444;
  text-align: center;
  padding: 0;
}

.prop th.sel {
  background: #7ab8f8;
  color: #fff;
}

.prop td.no {
  padding: 0;
  background: #f0f0f0;
  color: #555;
  text-align: center;
}

.prop td.link {
  color: #2f6fe0;
}

.prop td.shade {
  background: #eaeaea;
}

.prop td.chk {
  padding: 0;
  text-align: center;
}

.box {
  display: block;
  width: 12px;
  height: 12px;
  margin: 0 auto;
  border: 1px solid #888;
  border-radius: 2px;
}

.exp {
  display: inline-block;
  width: 10px;
  height: 10px;
  margin: 0 7px 0 -1px;
  border: 1px solid #777;
  border-radius: 2px;
  font-size: 11px;
  line-height: 9px;
  text-align: center;
  color: #333;
  vertical-align: -1px;
}

.splitter {
  width: 4px;
  flex: none;
}

.handle {
  display: flex;
  align-items: center;
  justify-content: flex-end;
  width: 4px;
  height: 100px;
  margin-top: 410px;
  background: #6b747c;
}

.handle-arrow {
  width: 0;
  height: 0;
  border-right: 3px solid #b8bcc0;
  border-top: 3px solid transparent;
  border-bottom: 3px solid transparent;
}

.viewport {
  flex: 1;
  background: #000;
}

.cad {
  display: block;
  width: 607px;
  height: 711px;
}

.cad .green path {
  fill: none;
  stroke: #0a7d0a;
  stroke-width: 1.300;
}

.cad .red path {
  fill: none;
  stroke: #f00;
  stroke-width: 1.300;
}

.cad-text text {
  fill: #fff;
  font-family: "DejaVu Sans", sans-serif;
  font-size: 15.500px;
  text-anchor: middle;
}

.markup {
  position: absolute;
  left: 0;
  top: 0;
  width: 1195px;
  height: 868px;
  pointer-events: none;
}
```
